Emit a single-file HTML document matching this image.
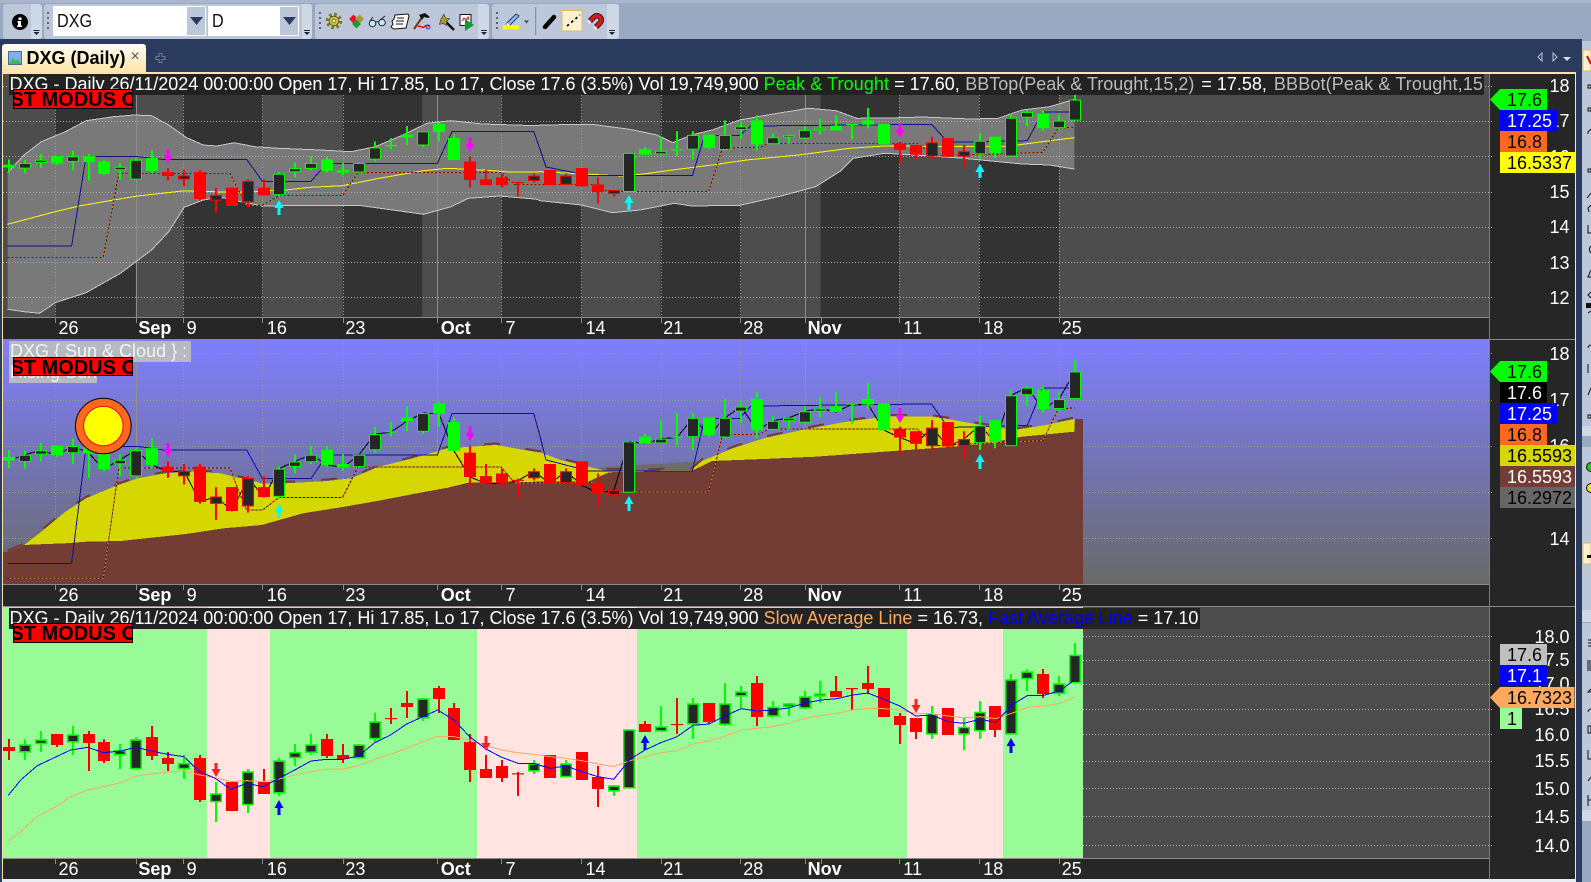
<!DOCTYPE html>
<html><head><meta charset="utf-8"><title>DXG (Daily)</title>
<style>
html,body{margin:0;padding:0;background:#9aa9c2;width:1591px;height:882px;overflow:hidden;font-family:"Liberation Sans",Arial,sans-serif}
.a{position:absolute}
#root{position:absolute;left:0;top:0;width:1591px;height:882px;overflow:hidden}
.tg{position:absolute;top:4px;height:35px;background:#bcc8d9;border-radius:3px}
.tgl{position:absolute;top:4px;height:35px;background:#cfd8e5;border-radius:0 3px 3px 0}
.inp{position:absolute;top:6px;height:30px;background:#fff;color:#111;font-size:18px;line-height:30px;padding-left:4px;box-sizing:border-box}
.inp span{display:inline-block;transform:scaleX(.9);transform-origin:0 50%}
.btn{position:absolute;top:6px;height:30px;background:#bcc8d9;border:1px solid #fff;border-left:0;box-sizing:border-box}
.title{position:absolute;background:#222;color:#fff;font-size:18px;line-height:21px;height:21px;white-space:pre;overflow:hidden;padding-left:.5px;box-sizing:border-box}
.st{position:absolute;left:13px;width:119.5px;height:19.4px;background:#f00;border:1px solid #000;box-sizing:border-box;overflow:hidden;color:#000;font-weight:bold;font-size:20px;line-height:20px;white-space:nowrap;text-indent:-3.6px}
.ax{position:absolute;left:0;width:1490px;height:20px;color:#fff;font-size:18px;line-height:20px}
.ax span{position:absolute;top:0}
.ax b{position:absolute;top:0}
.yl{position:absolute;right:21.5px;color:#fff;font-size:18px;line-height:20px}
.lb{position:absolute;left:1500px;height:21px;font-size:18px;line-height:22px;padding-left:7px;box-sizing:border-box;white-space:nowrap;color:#000}
.tip{left:1490px;padding-left:17px;clip-path:polygon(0 50%,10px 0,100% 0,100% 100%,10px 100%)}
</style></head><body>
<div id="root">
<!-- window chrome -->
<div class="a" style="left:0;top:0;width:1591px;height:3px;background:#aab6cc"></div>
<div class="a" style="left:0;top:39px;width:1582px;height:843px;background:#2a3b5d"></div>

<div class="tg" style="left:3px;width:38.5px"></div><div class="tgl" style="left:31px;width:10.5px"></div>
<div class="tg" style="left:44px;width:268px"></div><div class="tgl" style="left:302px;width:10px"></div>
<div class="tg" style="left:315px;width:173.5px"></div><div class="tgl" style="left:478px;width:10.5px"></div>
<div class="tg" style="left:492px;width:127px"></div><div class="tgl" style="left:607px;width:12px"></div>

<div class="inp" style="left:53px;width:134px"><span>DXG</span></div><div class="btn" style="left:187px;width:18.5px"></div>
<div class="inp" style="left:208px;width:72px"><span>D</span></div><div class="btn" style="left:280px;width:18.5px"></div>

<!-- tab -->
<div class="a" style="left:2px;top:44px;width:143.5px;height:28px;background:linear-gradient(#fffdf6,#ffe6a8);border-radius:3px 3px 0 0"></div>
<div class="a" style="left:26.5px;top:47px;font-size:18px;line-height:22px;font-weight:bold;color:#000;white-space:nowrap">DXG (Daily)</div>
<div class="a" style="left:130.5px;top:47px;font-size:16px;line-height:20px;color:#555">×</div>

<!-- chart frame -->
<div class="a" style="left:2px;top:72px;width:1573.5px;height:807px;background:#262626"></div>
<div class="a" style="left:2px;top:72px;width:1573.5px;height:2px;background:#ffe4a8"></div>
<div class="a" style="left:2px;top:72px;width:1px;height:807px;background:#ffe4a8"></div>
<div class="a" style="left:1574.5px;top:72px;width:1px;height:807px;background:#ffe4a8"></div>
<div class="a" style="left:2px;top:879px;width:1573.5px;height:3px;background:#e9edf2"></div>

<!-- right toolbar -->
<div class="a" style="left:1582px;top:41px;width:9px;height:385px;background:#bcc8d9"></div>
<div class="a" style="left:1582px;top:426px;width:9px;height:10px;background:#cfd8e5"></div>
<div class="a" style="left:1582px;top:447px;width:9px;height:163px;background:#bcc8d9"></div>
<div class="a" style="left:1582px;top:610px;width:9px;height:12px;background:#cfd8e5"></div>
<div class="a" style="left:1582px;top:623px;width:9px;height:187px;background:#bcc8d9"></div>
<div class="a" style="left:1582px;top:810px;width:9px;height:11px;background:#cfd8e5"></div>

<svg id="chart" class="a" style="left:0;top:0" width="1591" height="882" xmlns="http://www.w3.org/2000/svg"></svg>

<!-- toolbar + misc icons -->
<svg class="a" style="left:0;top:0" width="1591" height="882" xmlns="http://www.w3.org/2000/svg">
 <!-- info -->
 <circle cx="20" cy="22" r="8" fill="#000"/><rect x="18.5" y="17.5" width="3" height="2.5" fill="#fff"/><path d="M17.5 21h3.5v4.5h1v1.5h-5v-1.5h1v-3h-.5z" fill="#fff"/>
 <!-- grips -->
 <path d="M48 12v19M320 12v19M497 12v19" stroke="#56657e" stroke-width="2" stroke-dasharray="2 3" fill="none"/>
 <!-- overflow chevrons -->
 <g fill="#223"><path d="M33.5 30h6v1h-6zM33.5 32h6l-3 3z"/><path d="M304 30h6v1h-6zM304 32h6l-3 3z"/><path d="M481 30h6v1h-6zM481 32h6l-3 3z"/><path d="M609 30h6v1h-6zM609 32h6l-3 3z"/></g>
 <!-- combobox arrows -->
 <path d="M190 17h13l-6.500 8zM283 17h13l-6.500 8z" fill="#2a3b5d"/>
 <!-- gear icon -->
 <circle cx="334" cy="21" r="6.500" fill="none" stroke="#7d7820" stroke-width="3.500" stroke-dasharray="2.600 2.500"/>
 <circle cx="334" cy="21" r="4.800" fill="#c6c040" stroke="#55520f" stroke-width=".8"/>
 <circle cx="334" cy="21" r="1.600" fill="#fff" stroke="#55520f" stroke-width=".6"/>
 <!-- diamonds -->
 <path d="M349 19l4.500-4.500 4.500 4.500-4.500 4.500z" fill="#e8102a"/><path d="M355 19l4.500-4.500 4.500 4.500-4.500 4.500z" fill="#a89a30"/><path d="M352 24l4.500-4.500 4.500 4.500-4.500 4.500z" fill="#1c9a2c"/>
 <!-- glasses -->
 <g fill="#bfeaf0" stroke="#1c2a30" stroke-width="1"><circle cx="372.500" cy="23.500" r="3.300"/><circle cx="382" cy="22.500" r="3.300"/></g><path d="M375.500 22l3-.5M370 21l3-4M380 20l5-4" stroke="#1c2a30" fill="none"/>
 <!-- paper -->
 <path d="M395 15l13-1 1 2-3 12-12 1-3-2 2-3-1-3 2-2z" fill="#fff" stroke="#111"/><path d="M397 18h7M396 21h8M396 24h7" stroke="#111"/>
 <!-- hammer -->
 <path d="M414 29l9-13" stroke="#6b3a10" stroke-width="2"/><path d="M419 15l6-2 5 4-2 1-4-1-2 3z" fill="#111"/><path d="M418 27c2-3 4 2 6 0s3-2 5-.5" stroke="#d01010" fill="none" stroke-width="1.500"/><circle cx="428" cy="27" r="2" fill="none" stroke="#2040c0"/>
 <!-- wand -->
 <path d="M445 21l9 9" stroke="#111" stroke-width="2.500"/><path d="M441 19l3-5 1.500 4 4 .5-3 3 0 4-3.500-2-3.500 1 1-4z" fill="#a89a30" stroke="#333" stroke-width=".6"/>
 <!-- chart play -->
 <rect x="460" y="14.500" width="11" height="11" fill="#fff" stroke="#111"/><path d="M462 21l2-3 2 2 2-3 1 3" stroke="#d01010" fill="none"/><path d="M465 19l9 6-9 6z" fill="#109a30"/>
 <!-- pen yellow -->
 <path d="M507 23l9-9 3 2-9 9-4 1z" fill="#8fbcec" stroke="#24407a"/><path d="M507 23l3 2-4 1z" fill="#fff"/><rect x="503" y="25.300" width="16" height="4" fill="#ff0"/>
 <path d="M524 20.500h5l-2.500 3z" fill="#445"/>
 <rect x="535.200" y="7" width="1" height="28" fill="#7a889e"/>
 <path d="M545 27l9-10" stroke="#000" stroke-width="4.500" stroke-linecap="round"/>
 <rect x="562" y="10.500" width="20" height="20.500" fill="#fdf1d2" stroke="#e6b960"/>
 <path d="M567 26l13-11" stroke="#000" stroke-width="1.800" stroke-dasharray="2.500 3"/>
 <!-- magnet -->
 <path d="M590 21L594 17A4.200 4.200 0 0 1 600 23L596 27" fill="none" stroke="#301010" stroke-width="5.500"/>
 <path d="M590 21L594 17A4.200 4.200 0 0 1 600 23L596 27" fill="none" stroke="#d81818" stroke-width="3.600"/>
 <path d="M590 21l-1.500 1.500M596 27l-1.500 1.500" stroke="#eee" stroke-width="3.600"/>
 <!-- tab icon -->
 <rect x="8.500" y="51.500" width="13" height="13" fill="#7fb0e8" stroke="#4a6a9a"/><path d="M9 64l4-6 3 3 2-2 3 5z" fill="#38b860"/>
 <!-- plus ghost -->
 <path d="M156 56.500h3v-3h3v3h3v3h-3v3h-3v-3h-3z" fill="none" stroke="#6b7a92"/>
 <!-- nav arrows -->
 <path d="M1542 53v8l-4-4z" fill="none" stroke="#b9c4d8"/><path d="M1553 53v8l4-4z" fill="none" stroke="#b9c4d8"/><path d="M1563 57h8l-4 4z" fill="#d6dde8"/>
 <!-- right toolbar slivers -->
 <rect x="1583" y="50" width="8" height="21" fill="#fdf1d2" stroke="#e6b960"/><path d="M1587 56l4 8" stroke="#d01010" stroke-width="2"/>
 <rect x="1583" y="543" width="8" height="21" fill="#fdf1d2" stroke="#e6b960"/>
 <g fill="none" stroke="#111">
  <path d="M1588 85h3v3h-3zM1588 108h3v3h-3zM1591 129l-3 3v2M1588 169h3v3h-3zM1591 193l-4 5M1591 205l-3 3 1 4M1588 225v8h3M1591 246a3 4 0 0 0 0 7M1591 270l-3 7h3M1591 292l-3 3 3 3M1588 313l3-2M1591 345a3 3 0 0 0-3 3M1588 364v9M1591 388l-3 7M1588 415h3v3h-3z"/>
  <path d="M1588 640h3M1588 643h3M1588 646h3M1588 660v11M1590 660v11M1591 689l-3 3h3M1591 709a3 3 0 0 0-3 3M1588 726h3v7h-3zM1588 750v9h3M1591 777l-3 4M1588 795v11M1588 800h3"/>
 </g>
 <circle cx="1591" cy="467" r="4.500" fill="#22c822" stroke="#111"/><circle cx="1591" cy="488" r="4.500" fill="#e8e020" stroke="#111"/>
 <rect x="1586" y="303" width="5" height="5" fill="#111"/>
 <rect x="1587" y="555" width="4" height="3" fill="#111"/>
</svg>

<!-- Axis labels -->
<div class="ax" style="top:318px"><span style="left:58.5px">26</span><b style="left:138.4px">Sep</b><span style="left:186.6px">9</span><span style="left:266.9px">16</span><span style="left:345.4px">23</span><b style="left:440.8px">Oct</b><span style="left:505.5px">7</span><span style="left:585.5px">14</span><span style="left:663.3px">21</span><span style="left:743.2px">28</span><b style="left:807.6px">Nov</b><span style="left:903.3px">11</span><span style="left:983.2px">18</span><span style="left:1061.7px">25</span></div>
<div class="ax" style="top:585px"><span style="left:58.5px">26</span><b style="left:138.4px">Sep</b><span style="left:186.6px">9</span><span style="left:266.9px">16</span><span style="left:345.4px">23</span><b style="left:440.8px">Oct</b><span style="left:505.5px">7</span><span style="left:585.5px">14</span><span style="left:663.3px">21</span><span style="left:743.2px">28</span><b style="left:807.6px">Nov</b><span style="left:903.3px">11</span><span style="left:983.2px">18</span><span style="left:1061.7px">25</span></div>
<div class="ax" style="top:859px"><span style="left:58.5px">26</span><b style="left:138.4px">Sep</b><span style="left:186.6px">9</span><span style="left:266.9px">16</span><span style="left:345.4px">23</span><b style="left:440.8px">Oct</b><span style="left:505.5px">7</span><span style="left:585.5px">14</span><span style="left:663.3px">21</span><span style="left:743.2px">28</span><b style="left:807.6px">Nov</b><span style="left:903.3px">11</span><span style="left:983.2px">18</span><span style="left:1061.7px">25</span></div>

<!-- Y labels panel 1 -->
<div class="yl" style="top:76px">18</div><div class="yl" style="top:111px">17</div><div class="yl" style="top:147px">16</div><div class="yl" style="top:182px">15</div><div class="yl" style="top:217px">14</div><div class="yl" style="top:253px">13</div><div class="yl" style="top:288px">12</div>
<!-- Y labels panel 2 -->
<div class="yl" style="top:344px">18</div><div class="yl" style="top:390px">17</div><div class="yl" style="top:436px">16</div><div class="yl" style="top:529px">14</div>
<!-- Y labels panel 3 -->
<div class="yl" style="top:627px">18.0</div><div class="yl" style="top:650px">17.5</div><div class="yl" style="top:674px">17.0</div><div class="yl" style="top:699px">16.5</div><div class="yl" style="top:725px">16.0</div><div class="yl" style="top:751px">15.5</div><div class="yl" style="top:779px">15.0</div><div class="yl" style="top:807px">14.5</div><div class="yl" style="top:836px">14.0</div>

<!-- Value tags -->
<div class="lb tip" style="top:89px;width:57px;background:#0f0">17.6</div>
<div class="lb" style="top:110px;width:57px;background:#00f;color:#fff">17.25</div>
<div class="lb" style="top:131px;width:47px;background:#ff6820">16.8</div>
<div class="lb" style="top:152px;width:74.500px;background:#ff0">16.5337</div>

<div class="lb tip" style="top:361px;width:57px;background:#0f0">17.6</div>
<div class="lb" style="top:382px;width:47px;background:#000;color:#fff">17.6</div>
<div class="lb" style="top:403px;width:57px;background:#00f;color:#fff">17.25</div>
<div class="lb" style="top:424px;width:47px;background:#ff6820">16.8</div>
<div class="lb" style="top:445px;width:74.500px;background:#d6d600">16.5593</div>
<div class="lb" style="top:466px;width:74.500px;background:#733d36;color:#fff">16.5593</div>
<div class="lb" style="top:487px;width:74.500px;background:#666">16.2972</div>

<div class="lb" style="top:644px;width:47px;background:#bfbfbf">17.6</div>
<div class="lb" style="top:665px;width:47px;background:#00f;color:#fff">17.1</div>
<div class="lb tip" style="top:687px;width:84.500px;background:#ffa95f">16.7323</div>
<div class="lb" style="top:708px;width:22px;background:#98fb98">1</div>

<!-- Titles -->
<div class="title" style="left:9px;top:74px;width:1475px">DXG - Daily 26/11/2024 00:00:00 Open 17, Hi 17.85, Lo 17, Close 17.6 (3.5%) Vol 19,749,900 <span style="color:#0f0;letter-spacing:.1px">Peak &amp; Trought</span> = 17.60, <span style="color:#bbb;margin-left:.5px">BBTop(Peak &amp; Trought,15,2)</span><span style="margin-left:2px"> = 17.58, </span><span style="color:#bbb;margin-left:2px;letter-spacing:.13px">BBBot(Peak &amp; Trought,15</span></div>
<div class="st" style="top:89.300px">ST MODUS ON</div>

<div class="a" style="left:9px;top:341px;width:182px;height:20.700px;background:#b9b9c1;color:#f2f2f2;font-size:18px;line-height:21px;padding-left:1px;box-sizing:border-box;white-space:nowrap">DXG { Sun &amp; Cloud } :</div>
<div class="a" style="left:9px;top:361.700px;width:88px;height:21px;background:#b9b9c1;color:#f2f2f2;font-size:18px;line-height:21px;padding-left:1px;box-sizing:border-box;white-space:nowrap">Rising Sun</div>
<div class="st" style="top:356.700px">ST MODUS ON</div>

<div class="title" style="left:9px;top:608px;width:1190.500px">DXG - Daily 26/11/2024 00:00:00 Open 17, Hi 17.85, Lo 17, Close 17.6 (3.5%) Vol 19,749,900 <span style="color:#ffa95f">Slow Average Line</span> = 16.73, <span style="color:#00f">Fast Average Line</span> = 17.10</div>
<div class="st" style="top:623.300px">ST MODUS ON</div>
</div>

<script>
(function(){
var S=2.904;
function Z(x0,y0,a){return a.map(function(p){return [x0+p[0]/S,y0+p[1]/3];});}
function pts(a){return a.map(function(p){return p[0].toFixed(1)+','+p[1].toFixed(1);}).join(' ');}
var y1=function(p){return 85.7+(18-p)*35.27;};
var y2=function(p){return 353.3+(18-p)*46.25;};
var y3=function(p){return 636.3+831.7*Math.log(18/p);};
var pz=function(z){return 18*Math.exp(-(600+z/3-636.3)/831.7);};
var p1=function(y){return 18-(y-85.7)/35.27;};
var X=function(i){return 9+15.91*i;};
// [high,top,bottom,low,hollow] measured against panel 3
var D=[[417,441,453,480,0],[418,433,458,480,1],[393,418,433,456,1],[402,402,435,441,0],[378,403,428,465,1],[393,402,429,513,0],[418,426,483,489,0],[432,450,466,507,1],[411,418,508,508,1],[378,411,468,480,0],[456,474,492,513,0],[465,489,508,537,1],[465,474,600,606,0],[546,580,607,666,1],[546,546,633,633,0],[507,514,616,639,1],[507,546,582,582,0],[474,481,581,588,1],[432,456,475,498,1],[402,433,459,465,1],[402,417,468,474,0],[432,465,477,489,0],[432,433,476,476,1],[339,364,418,426,1],[324,354,357,372,0],[273,309,321,354,0],[294,295,356,363,1],[258,264,297,339,0],[309,324,420,420,0],[402,426,510,546,0],[465,507,534,534,0],[480,498,534,546,0],[516,520,523,588,0],[480,490,515,522,1],
[465,465,534,534,0],[480,490,532,532,1],[456,456,540,540,0],[498,531,567,621,0],[556,556,575,588,1],[388,388,566,566,1],[363,372,396,396,0],[318,379,395,395,1],[294,372,375,402,0],[294,310,374,417,1],[309,309,366,372,0],[249,310,375,378,1],[258,274,290,327,1],[228,249,351,378,0],[303,320,350,351,1],[309,310,321,348,1],[273,289,326,327,1],[243,280,290,309,1],[228,273,291,291,0],[264,264,267,330,0],[198,249,267,282,0],[264,264,351,351,0],[339,348,375,432,0],[354,354,396,417,0],[318,342,404,417,1],[324,324,405,405,0],[354,380,404,450,1],[303,335,394,417,1],[318,318,390,411,0],[222,238,404,404,1],[207,214,238,273,1],[207,222,282,294,0],[228,250,282,288,1],[129,164,250,250,1]];
function red(i){return (i>=10&&i<=16)||(i>=29&&i<=38)||(i>=56&&i<=60);}
function candles(yf,colf,inset){
 var s='';
 D.forEach(function(d,i){
  var c=colf(i,d),cx=Math.round(X(i));
  var h=yf(pz(d[0])),t=yf(pz(d[1])),b=yf(pz(d[2])),l=yf(pz(d[3]));
  var bh=Math.max(1.2,b-t);
  s+='<rect x="'+(cx-1)+'" y="'+h.toFixed(1)+'" width="2" height="'+(l-h).toFixed(1)+'" fill="'+c+'"/>';
  s+='<rect x="'+(cx-6)+'" y="'+t.toFixed(1)+'" width="12" height="'+bh.toFixed(1)+'" fill="'+c+'"/>';
  if(d[4]&&bh>2*inset) s+='<rect x="'+(cx-6+inset)+'" y="'+(t+inset).toFixed(1)+'" width="'+(12-2*inset)+'" height="'+(bh-2*inset).toFixed(1)+'" fill="#262626"/>';
 });
 return s;
}
function arrow(cx,yt,yb,c,down){
 var h=8,w=4.5,st=1.5,d;
 if(!down) d='M'+cx+' '+yt+'L'+(cx+w)+' '+(yt+h)+'L'+(cx+st)+' '+(yt+h)+'L'+(cx+st)+' '+yb+'L'+(cx-st)+' '+yb+'L'+(cx-st)+' '+(yt+h)+'L'+(cx-w)+' '+(yt+h)+'Z';
 else d='M'+cx+' '+yb+'L'+(cx+w)+' '+(yb-h)+'L'+(cx+st)+' '+(yb-h)+'L'+(cx+st)+' '+yt+'L'+(cx-st)+' '+yt+'L'+(cx-st)+' '+(yb-h)+'L'+(cx-w)+' '+(yb-h)+'Z';
 return '<path d="'+d+'" fill="'+c+'"/>';
}
function line(a,c,w,ext){return '<polyline points="'+pts(a)+'" fill="none" stroke="'+c+'" stroke-width="'+(w||1)+'" shape-rendering="crispEdges" '+(ext||'')+'/>';}
function rect(x,y,w,h,c){return '<rect x="'+x+'" y="'+y+'" width="'+w+'" height="'+h+'" fill="'+c+'"/>';}
var ticks=[55.4,135.7,183.2,262.4,342.6,437.3,501.4,581.3,660.5,740.4,804.5,820.6,899.2,979,1059];
var solid={135.7:1,437.3:1,804.5:1};
var s='<defs><linearGradient id="g2" x1="0" y1="0" x2="0" y2="1"><stop offset="0" stop-color="#7f7fff"/><stop offset="1" stop-color="#696969"/></linearGradient></defs>';
var dot='stroke-dasharray="1 2" shape-rendering="crispEdges"';
function hgrid(ys,x0,x1,c){return ys.map(function(y){y=Math.round(y)+.5;return '<line x1="'+x0+'" x2="'+x1+'" y1="'+y+'" y2="'+y+'" stroke="'+c+'" '+dot+'/>';}).join('');}
function vgrid(y0,y1,c,cs){return ticks.map(function(x){if(x==820.6)return '';var rx=Math.round(x)+.5;return solid[x]?'<line x1="'+rx+'" x2="'+rx+'" y1="'+y0+'" y2="'+y1+'" stroke="'+cs+'" shape-rendering="crispEdges"/>':'<line x1="'+rx+'" x2="'+rx+'" y1="'+y0+'" y2="'+y1+'" stroke="'+c+'" '+dot+'/>';}).join('');}
function axis(y){
 var r=rect(3,y,1487,1,'#8a8a8a');
 ticks.forEach(function(x){r+=rect(Math.round(x),y+1,1,5,'#8a8a8a');});
 return r;
}
var yt1=[18,17,16,15,14,13,12].map(y1), yt2=[18,17,16,15,14].map(y2);
// ---------- PANEL 1
s+=rect(3,74,1487,243,'#4d4d4d');
var bands=[[55.4,135.7],[183.2,262.4],[342.6,422.2],[501.4,581.3],[660.5,740.4],[820.6,899.2],[979,1059]];
bands.forEach(function(b){s+=rect(b[0],74,b[1]-b[0],243,'#333333');});
var bbT=Z(0,100,[[22,218],[70,165],[120,125],[190,95],[250,62],[330,50],[390,45],[440,47],[490,75],[540,112],[590,135],[630,138],[680,128],[740,140],[810,145],[930,150],[1020,155],[1090,140],[1170,105],[1240,70],[1310,62],[1400,72],[1560,77]]).concat(Z(540,70,[[0,165],[150,163],[260,178],[340,195],[385,218],[440,195],[500,180],[580,150],[660,135],[780,115],[860,122],[920,145],[1050,143],[1110,141],[1250,147],[1330,145],[1400,120],[1480,110],[1552,88]]));
var bbB=Z(0,100,[[22,628],[70,635],[115,640],[160,608],[250,578],[350,520],[440,450],[490,395],[535,322],[590,300],[640,292],[760,318],[880,316],[1050,317],[1230,343],[1310,320],[1360,295],[1450,288],[1560,298]]).concat(Z(540,70,[[0,392],[120,405],[210,428],[290,420],[390,400],[440,408],[580,406],[700,378],[800,350],[870,305],[910,265],[1000,250],[1090,255],[1230,265],[1400,282],[1480,285],[1552,297]]));
s+='<polygon points="'+pts(bbT.concat(bbB.slice().reverse()))+'" fill="#797979"/>';
s+=hgrid(yt1,3,1494,'#a8a8a8')+vgrid(74,317,'#9a9a9a','#8e8e8e');
s+=line(bbT,'#c8c8c8',1)+line(bbB,'#c8c8c8',1);
var yel=Z(0,100,[[22,373],[160,335],[230,318],[330,300],[400,288],[530,273],[690,277],[830,270],[900,262],[995,257],[1100,235],[1230,212],[1300,205],[1400,210],[1480,216],[1560,216]]).concat(Z(540,70,[[0,305],[240,318],[300,312],[400,298],[500,285],[600,270],[750,255],[900,235],[1000,228],[1200,230],[1350,230],[1480,212],[1552,203]]));
s+=line(yel,'#ffff00',1);
var blue=[[7.6,246],[71.6,246],[86,156.7],[137.7,156.7],[162,159.3],[246.6,159.3],[262.4,181.3],[311,181.3],[326.8,163.3],[437.3,163.3],[452,131.7],[533.8,131.7],[540,149],[546,167],[588,175.3],[692.5,175.3],[704.6,135.3],[739.7,135.3],[750.7,126],[931.5,124.3],[948,142.3],[1027.3,140.7],[1042.8,112],[1074.4,112]];
var org=[[7.6,257.3],[103.3,257.3],[118.8,173.3],[230,173.3],[238.3,190],[246.6,205.3],[262.4,205.3],[279,195.7],[342.6,195.7],[358,172.3],[501,172.3],[514.8,184.7],[591.7,184.3],[607.8,191.3],[708.7,191.3],[722.5,148],[760.4,147.3],[769,143.3],[917,143.3],[936,156],[1042.8,152.3],[1058.2,128.3],[1074.4,127.3]];
var dash='stroke-dasharray="2 2"';
s+=line(blue,'#0000ff',1)+line(blue,'#202020',1,dash);
s+=line(org,'#ff6820',1)+line(org,'#202020',1,dash);
s+=candles(y1,function(i){return red(i)?'#ff0000':'#00ff00';},1);
[[10,149,163],[29,137,152],[56,123,138]].forEach(function(a){s+=arrow(Math.round(X(a[0])),a[1],a[2],'#ff00ff',1);});
[[17,200,215],[39,195,210],[61,164,178]].forEach(function(a){s+=arrow(Math.round(X(a[0])),a[1],a[2],'#00ffff',0);});
s+=axis(317);
s+=rect(3,339,1572,1,'#8a8a8a');
// ---------- PANEL 2
s+=rect(3,340,1487,244,'url(#g2)');
s+=hgrid(yt2,3,1494,'#9c9c78')+vgrid(340,584,'#9a948c','#94908c');
var cloud=Z(540,335,[[150,408],[190,395],[280,390],[440,380],[470,378],[440,408],[280,410],[190,408]]);
s+='<polygon points="'+pts(cloud)+'" fill="#6c6c6c"/>';
var yTop=Z(0,335,[[22,651],[70,630],[120,590],[190,530],[250,490],[330,455],[400,430],[480,415],[560,410],[640,415],[700,430],[760,445],[830,445],[950,438],[1020,430],[1100,395],[1200,370],[1300,340],[1440,330],[1560,352]]).concat(Z(540,335,[[0,352],[60,375],[140,395],[190,407],[440,405],[470,378],[560,340],[650,310],[760,285],[880,262],[1000,245],[1140,245],[1200,255],[1280,270],[1380,285],[1480,268],[1552,252]]));
var bTop=Z(0,335,[[22,651],[70,630],[115,628],[190,625],[250,620],[350,618],[440,608],[540,597],[650,580],[760,570],[880,535],[1000,515],[1100,497],[1200,477],[1300,458],[1360,443],[1560,440]]).concat(Z(540,335,[[0,440],[140,440],[200,412],[440,408],[500,378],[650,372],[800,365],[1000,350],[1200,335],[1300,325],[1400,305],[1552,290]]));
var ySl=yTop.map(function(p){return [p[0],p[1]-1.5];});
var bPoly=bTop.concat([[1075,419],[1083,419],[1083,584],[7.6,584]]);
s+=line(ySl,'#733d36',2,'stroke-dasharray="16 26"');
s+='<polygon points="'+pts(bPoly)+'" fill="#733d36" shape-rendering="crispEdges"/>';
s+=rect(3,552,5,32,'#733d36');
s+='<polygon points="'+pts(yTop.concat(bTop.slice().reverse()))+'" fill="#d6d600" shape-rendering="crispEdges"/>';
s+=rect(1075,419,8,165,'#733d36');
function to2(a){return a.map(function(p){return [p[0],y2(p1(p[1]))];});}
var b2=to2(blue),o2=to2(org);
s+=line(b2,'#0000ff',1)+line(b2,'#202020',1,dash);
s+=line(o2,'#ff6820',1)+line(o2,'#202020',1,dash);
var closes=D.map(function(d,i){return [Math.round(X(i)),y2(pz(d[4]?d[1]:d[2]))];});
s+=line(closes,'#000',1);
s+=candles(y2,function(i){return red(i)?'#ff0000':'#00ff00';},1);
[[10,443,457],[29,426,441],[56,408,423]].forEach(function(a){s+=arrow(Math.round(X(a[0])),a[1],a[2],'#ff00ff',1);});
[[17,504,518],[39,496,511],[61,454,469]].forEach(function(a){s+=arrow(Math.round(X(a[0])),a[1],a[2],'#00ffff',0);});
// sun
s+='<circle cx="103.300" cy="426" r="27.800" fill="#ff6820" stroke="#000" stroke-width="1"/><circle cx="103.300" cy="426" r="19.800" fill="#ffff00" stroke="#e81010" stroke-width="1"/>';
s+=axis(584);
s+=rect(3,606,1572,1,'#8a8a8a');
// ---------- PANEL 3
s+=rect(3,607,1487,251,'#4d4d4d');
var gr='#98fb98',pk='#ffe4e1';
s+=rect(3,607,204,251,gr)+rect(207,607,63,251,pk)+rect(270,607,207,251,gr)+rect(477,607,160,251,pk)+rect(637,607,270,251,gr)+rect(907,607,96,251,pk)+rect(1003,607,80,251,gr);
var yt3=[18,17.5,17,16.5,16,15.5,15,14.5,14].map(y3);
s+=hgrid(yt3,1083,1494,'#b5b5b5');
s+=candles(y3,function(i,d){return d[4]?'#00ff00':'#ff0000';},1.5);
var slow=Z(0,600,[[24,722],[60,695],[108,650],[160,622],[205,590],[255,570],[300,560],[350,548],[394,528],[440,522],[487,516],[534,512],[580,525],[625,533],[670,545],[717,542],[763,545],[810,537],[856,525],[903,515],[949,508],[995,507],[1042,497],[1088,478],[1134,463],[1181,445],[1228,425],[1271,409],[1318,410],[1364,420],[1411,437],[1457,450],[1504,458],[1560,464]]).concat(Z(540,600,[[29,470],[75,475],[122,482],[168,492],[214,500],[261,482],[305,470],[351,458],[398,452],[445,432],[491,423],[537,408],[584,390],[630,385],[676,380],[722,370],[770,355],[816,347],[862,340],[908,330],[952,325],[998,326],[1045,330],[1091,340],[1138,341],[1185,348],[1231,353],[1278,350],[1324,356],[1370,340],[1417,322],[1463,318],[1510,310],[1552,291]]));
var fast=Z(0,600,[[24,586],[60,540],[108,497],[160,472],[205,450],[255,442],[300,458],[350,453],[394,442],[440,453],[487,463],[534,470],[580,515],[625,535],[670,568],[717,550],[763,560],[810,535],[856,510],[903,483],[949,478],[995,478],[1042,468],[1088,428],[1134,405],[1181,372],[1228,350],[1271,330],[1318,360],[1364,410],[1411,447],[1457,472],[1504,490],[1550,490]]).concat(Z(540,600,[[29,505],[75,498],[122,515],[168,530],[214,538],[261,478],[305,450],[351,428],[398,410],[445,376],[491,372],[537,348],[584,326],[630,333],[676,330],[722,324],[770,309],[816,300],[862,296],[908,285],[952,279],[998,298],[1045,318],[1091,348],[1138,345],[1185,365],[1231,370],[1278,358],[1324,367],[1370,315],[1417,286],[1463,286],[1510,272],[1552,240]]));
s+=line(slow,'#ffa95f',1)+line(fast,'#0000ff',1);
[[13,763,777],[30,736,751],[57,699,713]].forEach(function(a){s+=arrow(Math.round(X(a[0])),a[1],a[2],'#ff2020',1);});
[[17,800,815],[40,735,750],[63,738,753]].forEach(function(a){s+=arrow(Math.round(X(a[0])),a[1],a[2],'#0000ff',0);});
s+=axis(858);
// right vertical separator
s+=rect(1489,74,1,805,'#7c7c7c');
document.getElementById('chart').innerHTML=s;
})();
</script>
</body></html>
